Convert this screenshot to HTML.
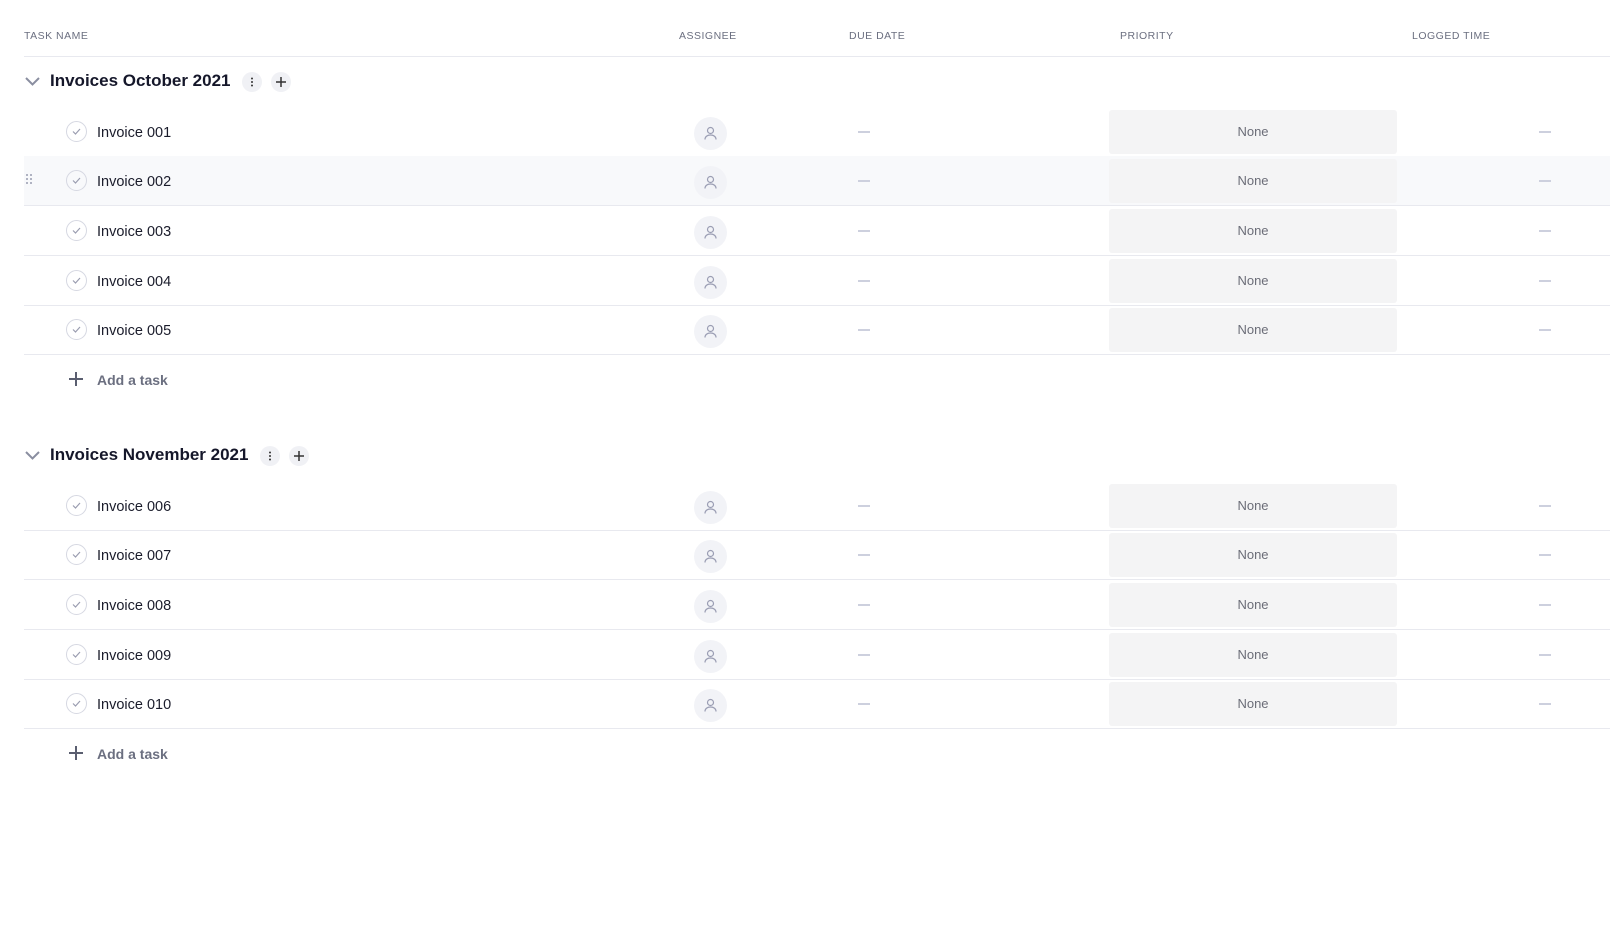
<!DOCTYPE html><html><head><style>
body{margin:0;width:1610px;height:926px;background:#fff;font-family:"Liberation Sans",sans-serif;position:relative;overflow:hidden}
.a{position:absolute}
.h{font-size:10.5px;color:#6b6f80;letter-spacing:.5px;top:30px}
.line{position:absolute;left:24px;width:1586px;height:1px;background:#e8e9ef}
.row{position:absolute;left:24px;width:1586px;height:49px}
.chk{position:absolute;left:42px;width:19px;height:19px;border:1px solid #d6d8e2;border-radius:50%;top:14px}
.nm{position:absolute;left:73px;top:18px;font-size:14.5px;color:#1a1c2b}
.av{position:absolute;left:670px;top:10px;width:33px;height:33px;border-radius:50%;background:#f2f3f7}
.dash{position:absolute;width:12px;height:2px;background:#cdd0de;top:24px}
.pr{position:absolute;left:1085px;top:3px;width:288px;height:44px;background:#f4f4f5;border-radius:3px;font-size:13px;color:#6b6d78;text-align:center;line-height:44px}
.g{position:absolute;left:50px;font-size:17px;font-weight:bold;color:#15172a}
.btn{position:absolute;width:20px;height:20px;border-radius:50%;background:#f0f1f5;font-size:15px;text-align:center;line-height:20px;color:#333}
.add{position:absolute;left:97px;font-size:14px;font-weight:bold;color:#6b6f80}
</style></head><body>
<div class="a h" style="left:24px">TASK NAME</div>
<div class="a h" style="left:679px">ASSIGNEE</div>
<div class="a h" style="left:849px">DUE DATE</div>
<div class="a h" style="left:1120px">PRIORITY</div>
<div class="a h" style="left:1412px">LOGGED TIME</div>
<div class="line" style="top:56px"></div>
<div id="c"></div>
<script>
var s='';
function grp(y,t,bx){
s+='<svg class="a" style="left:24px;top:'+(y-6)+'px" width="17" height="12"><path d="M2 2l6.5 6.5L15 2" stroke="#8a8ea0" stroke-width="2" fill="none"/></svg>';
s+='<div class="g" style="top:'+(y-11)+'px">'+t+'</div>';
s+='<div class="btn" style="left:'+bx+'px;top:'+(y-10)+'px"><svg width="20" height="20"><circle cx="10" cy="6.5" r="1" fill="#333"/><circle cx="10" cy="10" r="1" fill="#333"/><circle cx="10" cy="13.5" r="1" fill="#333"/></svg></div>';
s+='<div class="btn" style="left:'+(bx+29)+'px;top:'+(y-10)+'px"><svg width="20" height="20"><path d="M10 5v10M5 10h10" stroke="#333" stroke-width="1.5"/></svg></div>';
}
function rows(y0,n0){
for(var i=0;i<5;i++){var y=y0+i*49.7;var hv=(n0==1&&i==1);
s+='<div class="row" style="top:'+y+'px;'+(hv?'background:#f8f9fb':'')+'">'+(hv?'<svg class="a" style="left:1px;top:17px" width="8" height="14"><g fill="#9a9db0"><circle cx="2" cy="2" r="1"/><circle cx="6" cy="2" r="1"/><circle cx="2" cy="6" r="1"/><circle cx="6" cy="6" r="1"/><circle cx="2" cy="10" r="1"/><circle cx="6" cy="10" r="1"/></g></svg>':'')+
'<div class="chk"><svg width="19" height="19"><path d="M6 9.5l2.5 2.5L13 7" stroke="#9a9db0" stroke-width="1.2" fill="none"/></svg></div>'+
'<div class="nm">Invoice '+String(n0+i).padStart(3,'0')+'</div>'+
'<div class="av"><svg width="33" height="33"><circle cx="16.5" cy="13.5" r="3" stroke="#9a9db3" stroke-width="1.2" fill="none"/><path d="M11 22.5c0-3 2.5-4.5 5.5-4.5s5.5 1.5 5.5 4.5" stroke="#9a9db3" stroke-width="1.2" fill="none"/></svg></div>'+
'<div class="dash" style="left:834px"></div><div class="pr">None</div><div class="dash" style="left:1515px"></div></div>';
s+='<div class="line" style="top:'+(y+49)+'px"></div>';}
var ay=y0+5*49.7+24;
s+='<svg class="a" style="left:68px;top:'+(ay-8)+'px" width="16" height="16"><path d="M8 1v14M1 8h14" stroke="#5a5e70" stroke-width="2"/></svg><div class="add" style="top:'+(ay-7)+'px">Add a task</div>';
}
grp(82,'Invoices October 2021',242);rows(106.5,1);
grp(456,'Invoices November 2021',260);rows(480.5,6);
document.getElementById('c').innerHTML=s;
</script>
</body></html>
